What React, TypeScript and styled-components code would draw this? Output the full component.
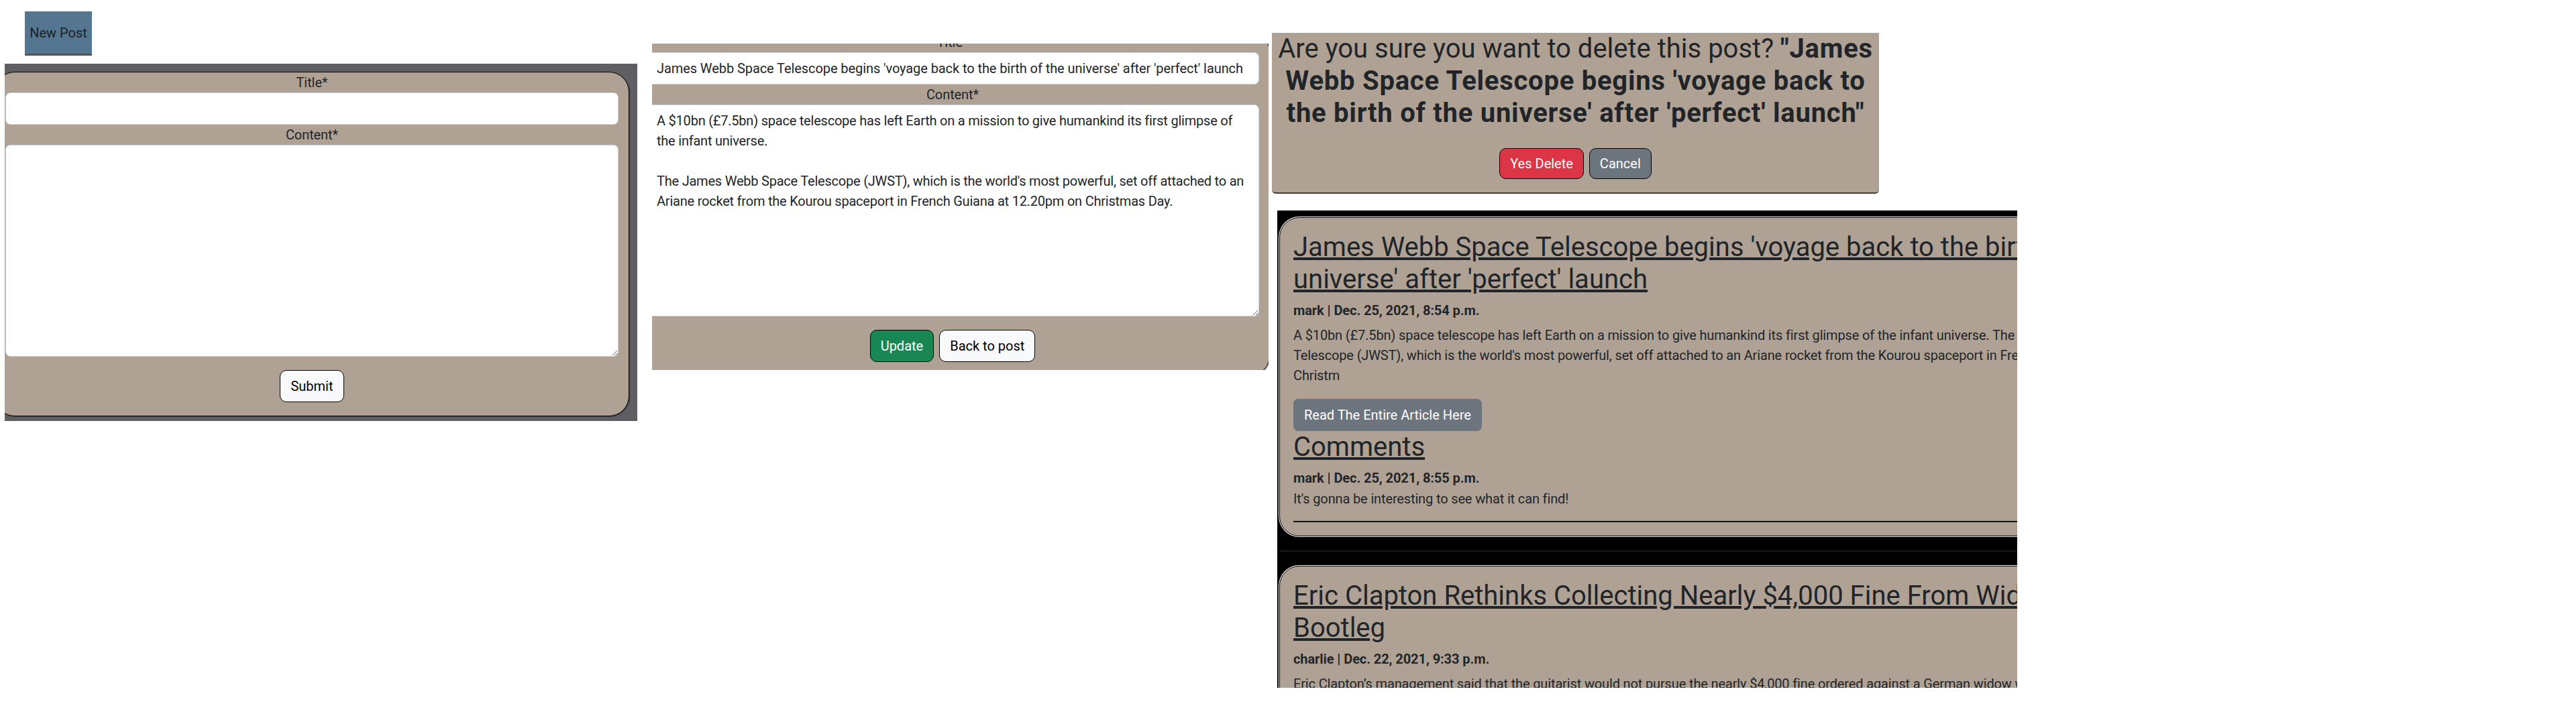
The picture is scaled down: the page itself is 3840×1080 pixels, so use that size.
import React from "react";
import styled, { createGlobalStyle } from "styled-components";

const FONT = `Roboto, "Liberation Sans", Arial, sans-serif`;
const TAN = "#afa294";
const INK = "#212529";

const GlobalStyle = createGlobalStyle`
  html { font-size: 20px; }
  body {
    margin: 0;
    background: #fff;
    font-family: ${FONT};
    color: ${INK};
    line-height: 1.5;
    letter-spacing: -0.08px;
  }
  *, *::before, *::after { box-sizing: border-box; }
`;

const Page = styled.div`
  display: flex;
  align-items: flex-start;
  width: 3840px;
  height: 1080px;
  overflow: hidden;
`;

/* ---------- column 1 : new post ---------- */
const CreateColumn = styled.div`
  flex-shrink: 0;
  display: flex;
  flex-direction: column;
  align-items: flex-start;
  margin-left: 7px;
`;

const NewPostButton = styled.button`
  margin: 17px 0 0 30px;
  width: 100px;
  height: 66px;
  padding: 0;
  background: #547691;
  border: none;
  border-bottom: 3px solid #55555a;
  color: #1d2226;
  font: 400 20px/1.5 ${FONT};
`;

const CreateFrame = styled.div`
  margin-top: 12px;
  width: 943px;
  height: 533px;
  padding-top: 12px;
  background: #5f5e63;
  overflow: hidden;
`;

/* ---------- column 2 : edit ---------- */
const EditFrame = styled.div`
  flex-shrink: 0;
  margin: 65px 0 0 22px;
  width: 919px;
  height: 487px;
  overflow: hidden;
`;

/* ---------- shared form card ---------- */
const FormCard = styled.form<{ $dx: number; $dy: number }>`
  display: flex;
  flex-direction: column;
  width: 946px;
  margin: ${(p) => p.$dy}px 0 0 ${(p) => p.$dx}px;
  padding: 0 15px 20px;
  background: ${TAN};
  border: 1px solid #000;
  border-radius: 30px;
  box-shadow: 1px 1px 1px rgba(0, 0, 0, 0.35);
`;

const FieldLabel = styled.label`
  display: block;
  text-align: center;
  font-size: 20px;
  line-height: 30px;
  color: ${INK};
`;

const TextInput = styled.input`
  display: block;
  width: 100%;
  height: 48px;
  padding: 7.5px 15px;
  font: 400 20px/1.5 ${FONT};
  letter-spacing: -0.08px;
  color: ${INK};
  background: #fff;
  border: 1px solid #ced4da;
  border-radius: 7.5px;
  outline: none;
`;

const TextArea = styled.textarea`
  display: block;
  width: 100%;
  height: 316px;
  padding: 7.5px 15px;
  font: 400 20px/1.5 ${FONT};
  letter-spacing: -0.22px;
  color: ${INK};
  background: #fff;
  border: 1px solid #ced4da;
  border-radius: 7.5px;
  resize: vertical;
  outline: none;
`;

const Actions = styled.div<{ $top: number }>`
  display: flex;
  justify-content: center;
  gap: 8px;
  margin-top: ${(p) => p.$top}px;
`;

const variants = {
  light: { bg: "#f8f9fa", fg: "#000", border: "#000" },
  success: { bg: "#198754", fg: "#fff", border: "#000" },
  danger: { bg: "#dc3545", fg: "#fff", border: "#000" },
  cancel: { bg: "#6c757d", fg: "#fff", border: "#000" },
  secondary: { bg: "#6c757d", fg: "#fff", border: "#6c757d" },
};

const Btn = styled.button<{ $v: keyof typeof variants; $h?: number; $r?: number }>`
  height: ${(p) => p.$h ?? 48}px;
  padding: 0 15px;
  font: 400 20px/1.5 ${FONT};
  color: ${(p) => variants[p.$v].fg};
  background: ${(p) => variants[p.$v].bg};
  border: 1px solid ${(p) => variants[p.$v].border};
  border-radius: ${(p) => p.$r ?? 10}px;
  white-space: nowrap;
`;

/* ---------- column 3 : delete + list ---------- */
const RightColumn = styled.div`
  flex-shrink: 0;
  display: flex;
  flex-direction: column;
  align-items: flex-start;
  margin: 49px 0 0 5px;
`;

const DeletePanel = styled.div`
  width: 905px;
  padding-bottom: 20px;
  background: ${TAN};
  border-bottom: 2px solid #3e3e42;
  border-radius: 0 0 6px 6px;
  text-align: center;
`;

const DeleteHeading = styled.h2`
  margin: 0 0 28px;
  font-size: 40px;
  line-height: 1.2;
  font-weight: 400;
  letter-spacing: 0;
  color: ${INK};
`;

const Strong = styled.strong`
  font-weight: 700;
  letter-spacing: 0.75px;
`;

const PostsFrame = styled.div`
  margin: 25px 0 0 8px;
  width: 1103px;
  height: 712px;
  padding: 10px 0 0 3px;
  background: #000;
  overflow: hidden;
  display: flex;
  flex-direction: column;
  align-items: flex-start;
`;

const PostCard = styled.article`
  flex-shrink: 0;
  width: 1376px;
  padding: 20px;
  background: ${TAN};
  border: 1px solid #000;
  border-radius: 30px;
  box-shadow: 0 0 0 1px #fff;
`;

const PostTitle = styled.h2`
  margin: 0 0 10px;
  font-size: 40px;
  line-height: 1.2;
  font-weight: 400;
  letter-spacing: 0;

  a {
    color: ${INK};
    text-decoration: underline;
  }
`;

const Meta = styled.h6<{ $mb: number }>`
  margin: 0 0 ${(p) => p.$mb}px;
  font-size: 20px;
  line-height: 1.2;
  font-weight: 700;
  color: ${INK};
`;

const Body = styled.p<{ $mb: number }>`
  margin: 0 0 ${(p) => p.$mb}px;
  font-size: 20px;
  line-height: 1.5;
  letter-spacing: -0.14px;
  color: ${INK};
`;

const Rule = styled.hr`
  margin: 18px 0 0;
  border: 0;
  border-top: 2px solid #111;
`;

const Divider = styled.div`
  flex-shrink: 0;
  width: 100%;
  height: 2px;
  margin: 21px 0;
  background: #1b1b1b;
`;

const TITLE =
  "James Webb Space Telescope begins 'voyage back to the birth of the universe' after 'perfect' launch";
const CONTENT =
  "A $10bn (£7.5bn) space telescope has left Earth on a mission to give humankind its first glimpse of the infant universe.\n\nThe James Webb Space Telescope (JWST), which is the world's most powerful, set off attached to an Ariane rocket from the Kourou spaceport in French Guiana at 12.20pm on Christmas Day.";

export default function App() {
  return (
    <>
      <GlobalStyle />
      <Page>
        <CreateColumn>
          <NewPostButton type="button">New Post</NewPostButton>
          <CreateFrame>
            <FormCard $dx={-15} $dy={0} onSubmit={(e) => e.preventDefault()}>
              <FieldLabel htmlFor="c-title">Title*</FieldLabel>
              <TextInput id="c-title" type="text" />
              <FieldLabel htmlFor="c-content">Content*</FieldLabel>
              <TextArea id="c-content" />
              <Actions $top={20}>
                <Btn $v="light" type="submit">Submit</Btn>
              </Actions>
            </FormCard>
          </CreateFrame>
        </CreateColumn>

        <EditFrame>
          <FormCard $dx={-25} $dy={-18} onSubmit={(e) => e.preventDefault()}>
            <FieldLabel htmlFor="e-title">Title*</FieldLabel>
            <TextInput id="e-title" type="text" defaultValue={TITLE} />
            <FieldLabel htmlFor="e-content">Content*</FieldLabel>
            <TextArea id="e-content" defaultValue={CONTENT} />
            <Actions $top={20}>
              <Btn $v="success" type="submit">Update</Btn>
              <Btn $v="light" type="button">Back to post</Btn>
            </Actions>
          </FormCard>
        </EditFrame>

        <RightColumn>
          <DeletePanel>
            <DeleteHeading>
              Are you sure you want to delete this post? <Strong>"{TITLE}"</Strong>
            </DeleteHeading>
            <Actions $top={0}>
              <Btn $v="danger" $h={46} type="button">Yes Delete</Btn>
              <Btn $v="cancel" $h={46} type="button">Cancel</Btn>
            </Actions>
          </DeletePanel>

          <PostsFrame>
            <PostCard>
              <PostTitle>
                <a href="#">{TITLE}</a>
              </PostTitle>
              <Meta $mb={10}>mark | Dec. 25, 2021, 8:54 p.m.</Meta>
              <Body $mb={20}>
                A $10bn (£7.5bn) space telescope has left Earth on a mission to give humankind its first
                glimpse of the infant universe. The James Webb Space Telescope (JWST), which is the
                world's most powerful, set off attached to an Ariane rocket from the Kourou spaceport in
                French Guiana at 12.20pm on Christm
              </Body>
              <Btn $v="secondary" $r={7} type="button">Read The Entire Article Here</Btn>
              <PostTitle>
                <a href="#">Comments</a>
              </PostTitle>
              <Meta $mb={4}>mark | Dec. 25, 2021, 8:55 p.m.</Meta>
              <Body $mb={0}>It's gonna be interesting to see what it can find!</Body>
              <Rule />
            </PostCard>
            <Divider />
            <PostCard>
              <PostTitle>
                <a href="#">Eric Clapton Rethinks Collecting Nearly $4,000 Fine From Widow Who Sold Bootleg</a>
              </PostTitle>
              <Meta $mb={10}>charlie | Dec. 22, 2021, 9:33 p.m.</Meta>
              <Body $mb={20}>
                Eric Clapton’s management said that the guitarist would not pursue the nearly $4,000 fine
                ordered against a German widow who sold a bootleg recording of one of his concerts online.
              </Body>
            </PostCard>
          </PostsFrame>
        </RightColumn>
      </Page>
    </>
  );
}
